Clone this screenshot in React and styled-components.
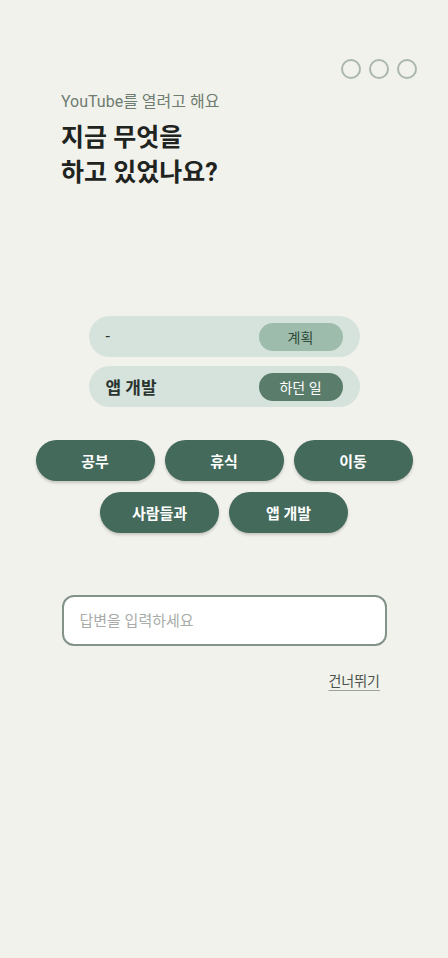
import React, { useState } from "react";
import styled, { createGlobalStyle } from "styled-components";

const Global = createGlobalStyle`
  html, body {
    margin: 0;
    padding: 0;
    background: #f2f2ec;
  }
  body {
    font-family: Roboto, "Noto Sans CJK KR", sans-serif;
  }
`;

const Page = styled.div`
  min-height: 958px;
  background: #f2f2ec;
  display: flex;
  flex-direction: column;
  padding-top: 59px;
  box-sizing: border-box;
`;

const Dots = styled.div`
  display: flex;
  justify-content: flex-end;
  gap: 8px;
  padding-right: 31px;
`;

const Dot = styled.span`
  width: 20px;
  height: 20px;
  border-radius: 50%;
  border: 2px solid #aab7ae;
  box-sizing: border-box;
`;

const Header = styled.div`
  padding-left: 61px;
  margin-top: 12px;
`;

const Sub = styled.div`
  font-size: 16px;
  line-height: 22px;
  color: #6e7c71;
`;

const Title = styled.h1`
  margin: 7px 0 0;
  font-size: 25px;
  line-height: 35px;
  font-weight: 700;
  color: #1f2421;
`;

const Rows = styled.div`
  margin-top: 126px;
  display: flex;
  flex-direction: column;
  align-items: center;
  gap: 9px;
`;

const Row = styled.div`
  width: 271px;
  height: 41px;
  border-radius: 21px;
  background: #d6e3dc;
  display: flex;
  align-items: center;
  justify-content: space-between;
  padding: 0 17px 0 17px;
  box-sizing: border-box;
`;

const RowText = styled.span`
  font-size: ${(p) => (p.$bold ? "17px" : "16px")};
  font-weight: ${(p) => (p.$bold ? 700 : 400)};
  color: #2a3530;
`;

const Tag = styled.span`
  width: 84px;
  height: 28px;
  border-radius: 14px;
  display: flex;
  align-items: center;
  justify-content: center;
  font-size: 14px;
  background: ${(p) => (p.$dark ? "#5a7d6b" : "#9dbcab")};
  color: ${(p) => (p.$dark ? "#ffffff" : "#2f4a3c")};
`;

const Chips = styled.div`
  margin-top: 33px;
  display: flex;
  flex-wrap: wrap;
  justify-content: center;
  gap: 11px 10px;
  padding: 0 35px;
`;

const Chip = styled.button`
  width: 119px;
  height: 41px;
  border: none;
  border-radius: 21px;
  background: #446a5b;
  color: #ffffff;
  font-family: inherit;
  font-size: 15px;
  font-weight: 700;
  box-shadow: 0 2px 3px rgba(0, 0, 0, 0.18);
  cursor: pointer;
`;

const InputWrap = styled.div`
  margin-top: 62px;
  display: flex;
  justify-content: center;
`;

const Input = styled.input`
  width: 325px;
  height: 51px;
  box-sizing: border-box;
  border: 2px solid #83938a;
  border-radius: 12px;
  background: #ffffff;
  padding: 0 16px;
  font-family: inherit;
  font-size: 15px;
  color: #2a3530;
  outline: none;
  &::placeholder {
    color: #a8aca8;
  }
`;

const SkipRow = styled.div`
  display: flex;
  justify-content: flex-end;
  padding-right: 68px;
  margin-top: 24px;
`;

const Skip = styled.span`
  font-size: 14px;
  color: #4a524d;
  text-decoration: underline;
  text-decoration-color: #9aa39d;
  text-underline-offset: 4px;
`;

const chips = ["공부", "휴식", "이동", "사람들과", "앱 개발"];

const App = () => {
  const [answer, setAnswer] = useState("");
  return (
    <Page>
      <Global />
      <Dots>
        <Dot />
        <Dot />
        <Dot />
      </Dots>
      <Header>
        <Sub>YouTube를 열려고 해요</Sub>
        <Title>
          지금 무엇을
          <br />
          하고 있었나요?
        </Title>
      </Header>
      <Rows>
        <Row>
          <RowText>-</RowText>
          <Tag>계획</Tag>
        </Row>
        <Row>
          <RowText $bold>앱 개발</RowText>
          <Tag $dark>하던 일</Tag>
        </Row>
      </Rows>
      <Chips>
        {chips.map((c) => (
          <Chip key={c}>{c}</Chip>
        ))}
      </Chips>
      <InputWrap>
        <Input
          placeholder="답변을 입력하세요"
          value={answer}
          onChange={(e) => setAnswer(e.target.value)}
        />
      </InputWrap>
      <SkipRow>
        <Skip>건너뛰기</Skip>
      </SkipRow>
    </Page>
  );
};

export default App;
